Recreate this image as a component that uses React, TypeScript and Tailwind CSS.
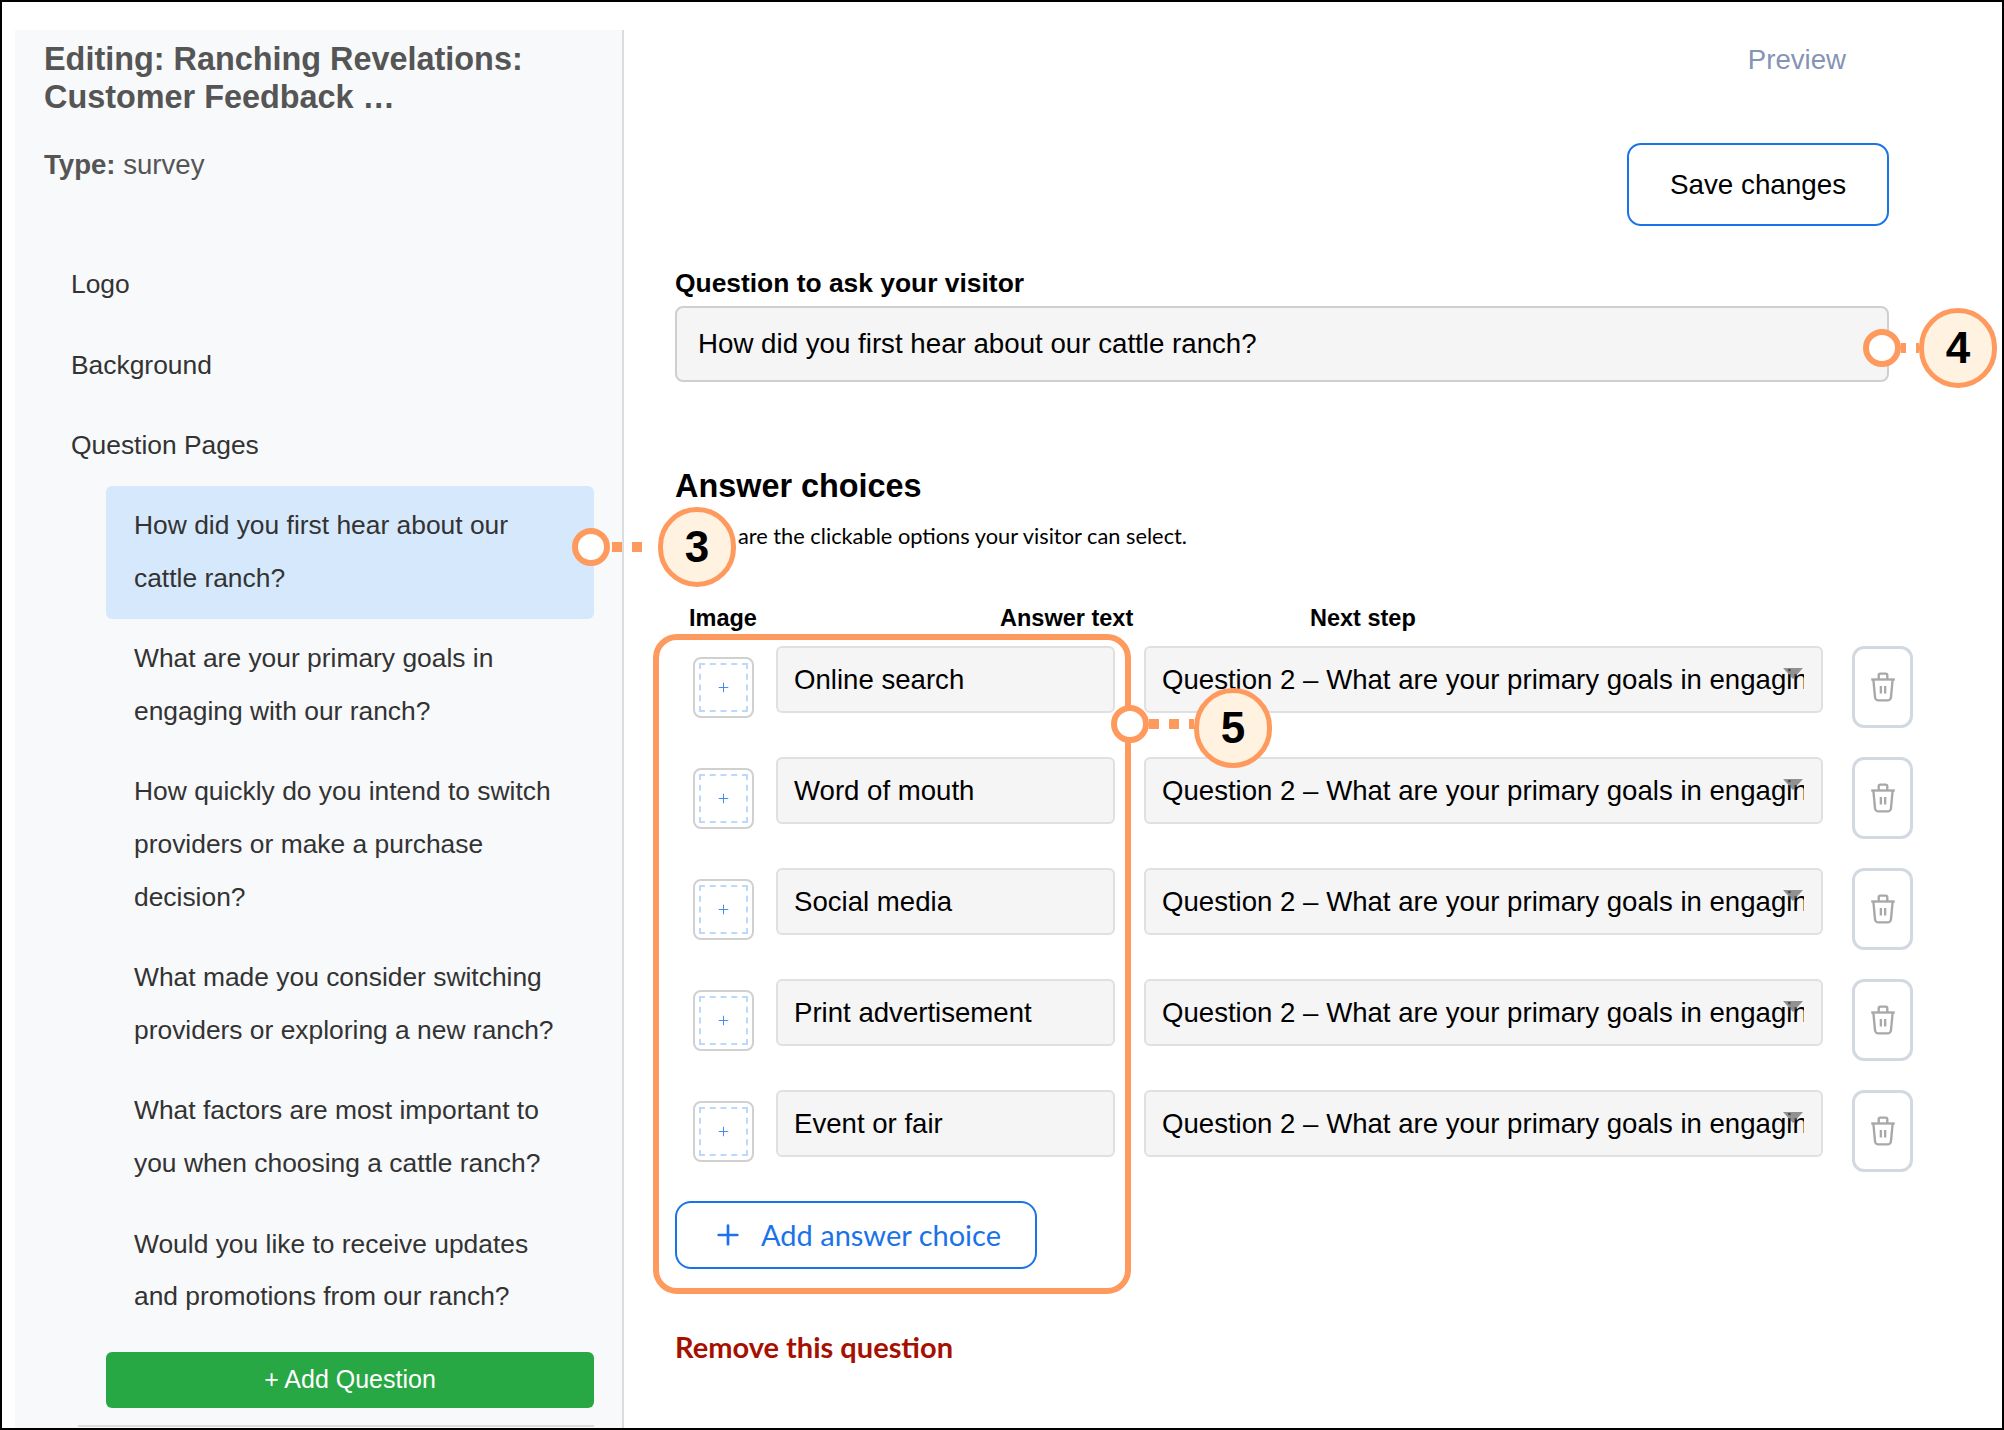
import { Plus } from "lucide-react";

const questions = [
  "How did you first hear about our cattle ranch?",
  "What are your primary goals in engaging with our ranch?",
  "How quickly do you intend to switch providers or make a purchase decision?",
  "What made you consider switching providers or exploring a new ranch?",
  "What factors are most important to you when choosing a cattle ranch?",
  "Would you like to receive updates and promotions from our ranch?",
];

const answers = ["Online search", "Word of mouth", "Social media", "Print advertisement", "Event or fair"];

function Callout({ n, wrap, dots, lift = "" }: { n: string; wrap: string; dots: string[]; lift?: string }) {
  return (
    <div className={`absolute flex items-center ${wrap}`}>
      <div className={`relative z-10 w-[38px] h-[38px] rounded-full bg-white border-[6px] border-[#ff9a5f] shrink-0 ${lift}`} />
      <div className={`flex ${dots[0]} ${lift}`}>
        {dots.slice(1).map((d, i) => (
          <div key={i} className={d} />
        ))}
      </div>
      <div className="w-[78px] h-[80px] rounded-full bg-[#fff2e0] border-[5px] border-[#ff9a5f] flex items-center justify-center text-[44px] font-bold text-black shrink-0 font-['Liberation_Sans',sans-serif]">
        {n}
      </div>
    </div>
  );
}

function TrashIcon() {
  return (
    <svg width="26" height="30" viewBox="0 0 24 28" fill="none" stroke="#a8a8a8" strokeWidth="2.2">
      <path d="M1 7H23" />
      <path d="M8 7V3a1.5 1.5 0 0 1 1.5-1.5h5A1.5 1.5 0 0 1 16 3V7" />
      <path d="M3 7l1.5 16a3.5 3.5 0 0 0 3.5 3.5h8a3.5 3.5 0 0 0 3.5-3.5L21 7" />
      <path d="M10 13v7M14 13v7" />
    </svg>
  );
}

function AnswerRow({ label }: { label: string }) {
  return (
    <div className="flex items-start h-[111px]">
      <div className="mt-[11px] ml-[18px] w-[61px] h-[61px] rounded-[8px] border-2 border-[#d0d0d0] bg-white p-[4px] shrink-0">
        <div className="w-full h-full border-2 border-dashed border-[#bcd8fb] flex items-center justify-center">
          <Plus size={15} strokeWidth={1.5} className="text-[#3b82f6]" />
        </div>
      </div>
      <div className="ml-[22px] w-[339px] h-[67px] rounded-[6px] border-2 border-[#e0e0e0] bg-[#f5f5f5] pl-[16px] pt-[16px] text-[27.6px] leading-[32px] text-black shrink-0">
        {label}
      </div>
      <div className="relative ml-[29px] w-[679px] h-[67px] rounded-[6px] border-2 border-[#e0e0e0] bg-[#f5f5f5] pl-[16px] pr-[17px] pt-[16px] text-[27.6px] leading-[32px] text-black shrink-0">
        <div className="overflow-hidden whitespace-nowrap">
          Question 2 – What are your primary goals in engaging with our ranch?
        </div>
        <div className="absolute top-[20px] left-[637px] w-0 h-0 border-l-[10px] border-r-[10px] border-t-[11px] border-l-transparent border-r-transparent border-t-[#666]/70" />
      </div>
      <div className="ml-[29px] w-[61px] h-[82px] rounded-[12px] border-[3px] border-[#d3d9e0] bg-white flex items-center justify-center shrink-0">
        <TrashIcon />
      </div>
    </div>
  );
}

export default function App() {
  return (
    <div className="relative w-[2004px] h-[1430px] overflow-hidden bg-white border-2 border-black flex font-['Liberation_Sans',sans-serif]">
      <aside className="mt-[28px] ml-[13px] w-[609px] h-[1400px] bg-[#f8f9fb] border-r-2 border-[#dcdcdc] overflow-hidden shrink-0">
        <h1 className="pl-[29px] pt-[10px] text-[32.4px] leading-[38px] font-bold text-[#555]">
          Editing: Ranching Revelations:
          <br />
          Customer Feedback …
        </h1>
        <p className="pl-[29px] mt-[31px] text-[27.6px] leading-[36px] text-[#555]">
          <b>Type:</b> survey
        </p>
        <nav className="mt-[83px] text-[26.4px] text-[#333]">
          <div className="pl-[56px] h-[80.5px] leading-[36px]">Logo</div>
          <div className="pl-[56px] h-[80.5px] leading-[36px]">Background</div>
          <div className="pl-[56px] h-[59px] leading-[36px]">Question Pages</div>
          <ul className="ml-[91px] w-[488px]">
            {questions.map((q, i) => (
              <li
                key={q}
                className={`rounded-[6px] px-[28px] pt-[13px] pb-[15px] leading-[52.6px] ${i === 0 ? "bg-[#d6e8fc]" : ""}`}
              >
                {q}
              </li>
            ))}
          </ul>
          <button className="mt-[14px] ml-[91px] w-[488px] h-[56px] rounded-[6px] bg-[#28a745] text-white text-[25px]">
            + Add Question
          </button>
          <div className="mt-[17px] ml-[63px] w-[516px] h-[2px] bg-[#dcdcdc]" />
        </nav>
      </aside>

      <main className="relative flex-1 pl-[51px]">
        <div className="flex justify-end pr-[156px] pt-[42px]">
          <span className="text-[27.6px] leading-[32px] text-[#8593b5]">Preview</span>
        </div>
        <div className="flex justify-end pr-[113px] mt-[67px]">
          <button className="w-[262px] h-[83px] rounded-[14px] border-2 border-[#1a73e8] text-[27.8px] text-black">
            Save changes
          </button>
        </div>
        <label className="block mt-[42px] text-[26.4px] leading-[30px] font-bold text-black">
          Question to ask your visitor
        </label>
        <div className="mt-[8px] w-[1214px] h-[76px] rounded-[8px] border-2 border-[#cfcfcf] bg-[#f5f5f5] pl-[21px] pt-[20px] text-[27.7px] leading-[32px] text-black">
          How did you first hear about our cattle ranch?
        </div>
        <h2 className="mt-[84px] text-[32.4px] leading-[40px] font-bold text-black">Answer choices</h2>
        <p className="mt-[17px] text-[21.8px] leading-[26px] text-black font-['Lato',sans-serif]">
          These are the clickable options your visitor can select.
        </p>
        <div className="relative mt-[54px] h-[30px] text-[23.5px] leading-[30px] font-bold text-black">
          <span className="absolute left-[14px]">Image</span>
          <span className="absolute left-[325px]">Answer text</span>
          <span className="absolute left-[635px]">Next step</span>
        </div>
        <div className="mt-[13px]">
          {answers.map((a) => (
            <AnswerRow key={a} label={a} />
          ))}
        </div>
        <button className="flex items-center w-[362px] h-[68px] rounded-[16px] border-2 border-[#1a73e8] pl-[35px] text-[29px] text-[#1a73e8] font-['Lato',sans-serif]">
          <Plus size={32} strokeWidth={2} className="mr-[17px]" />
          Add answer choice
        </button>
        <p className="mt-[61px] text-[29px] leading-[34px] font-bold text-[#a61000] font-['Lato',sans-serif]">
          Remove this question
        </p>
      </main>

      <div className="absolute left-[651px] top-[632px] w-[478px] h-[660px] rounded-[24px] border-[6px] border-[#ff9a5f] pointer-events-none" />
      <Callout
        n="3"
        wrap="left-[570px] top-[505px]"
        dots={["items-center gap-[10px] w-[48px] pl-[2px]", "w-[10px] h-[10px] bg-[#ff9a5f]", "w-[10px] h-[10px] bg-[#ff9a5f]"]}
      />
      <Callout
        n="4"
        wrap="left-[1861px] top-[306px]"
        dots={["items-center gap-[10px] w-[18px] overflow-hidden", "w-[5px] h-[10px] bg-[#ff9a5f] shrink-0", "w-[3px] h-[10px] bg-[#ff9a5f] shrink-0"]}
      />
      <Callout
        n="5"
        wrap="left-[1109px] top-[686px]"
        lift="-translate-y-[4px]"
        dots={["items-center gap-[10px] w-[45px]", "w-[10px] h-[10px] bg-[#ff9a5f]", "w-[10px] h-[10px] bg-[#ff9a5f]", "w-[5px] h-[10px] bg-[#ff9a5f]"]}
      />
    </div>
  );
}
